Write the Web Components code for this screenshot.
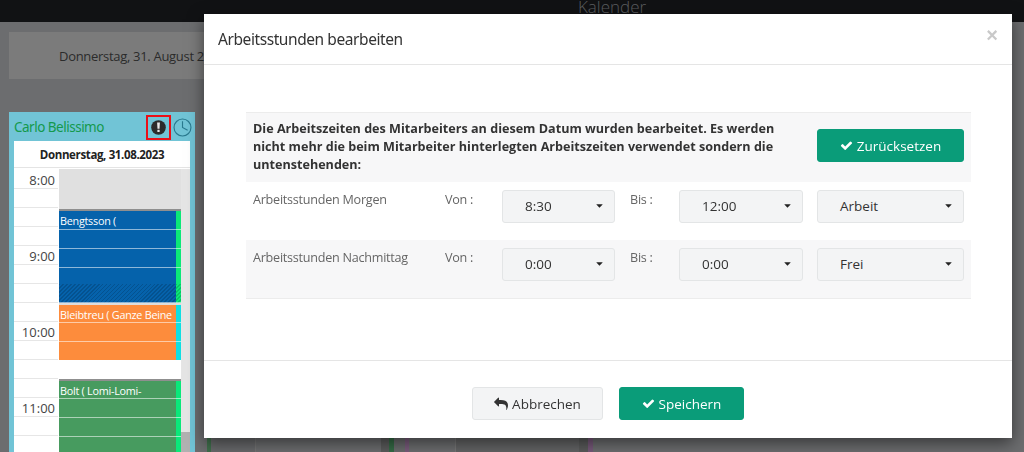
<!DOCTYPE html>
<html lang="de">
<head>
<meta charset="utf-8">
<title>Arbeitsstunden bearbeiten</title>
<style>
html,body{margin:0;height:452px;overflow:hidden;background:#6c6d6f;font-family:"Open Sans","Noto Sans",sans-serif;}
</style>
</head>
<body>
<app-page></app-page>
<script>
const ICONS={
 check:['0 0 1792 1792','<path fill="currentColor" d="M1671 566q0 40-28 68l-724 724-136 136q-28 28-68 28t-68-28l-136-136-362-362q-28-28-28-68t28-68l136-136q28-28 68-28t68 28l294 295 656-657q28-28 68-28t68 28l136 136q28 28 28 68z"/>'],
 reply:['0 0 1792 1792','<path fill="currentColor" d="M1792 1120q0 166-127 451-3 7-10.5 24t-13.5 30-13 22q-12 17-28 17-15 0-23.5-10t-8.5-25q0-9 2.5-26.5t2.5-23.5q5-68 5-123 0-101-17.5-181t-48.5-138.5-80-101-105.5-69.5-133-42.5-154-21.5-175.5-6h-224v256q0 26-19 45t-45 19-45-19l-512-512q-19-19-19-45t19-45l512-512q19-19 45-19t45 19 19 45v256h224q713 0 875 403 53 134 53 333z"/>'],
 alert:['0 0 16 16','<circle cx="8" cy="8" r="7.8" fill="currentColor"/><path d="M6.5 2.6h3L9.1 9.4H6.9z" fill="#e8e8e8"/><rect x="6.8" y="10.4" width="2.4" height="2.4" rx=".3" fill="#e8e8e8"/>'],
 clock:['0 0 20 20','<circle cx="10" cy="10" r="8.9" fill="none" stroke="currentColor" stroke-width="1.2"/><path d="M10 3.4V10l5.4 3" fill="none" stroke="currentColor" stroke-width="1.2"/>'],
 caret:['0 0 8 5','<path fill="currentColor" d="M.3.4h7.4q.3 0 .2.3L4.3 4.4q-.3.3-.6 0L.1.7Q0 .4.3.4z"/>']
};
function def(name,css,html,init){
 customElements.define(name,class extends HTMLElement{
  connectedCallback(){
   if(this.shadowRoot)return;
   const r=this.attachShadow({mode:'open'});
   const a=n=>this.getAttribute(n)||'';
   r.innerHTML='<style>'+css+'</style>'+(typeof html==='function'?html(a):html);
   if(init)init(r,a,this);
  }
 });
}
def('fa-icon',':host{display:inline-flex;line-height:0}svg{width:100%;height:100%;display:block}',
 a=>{const i=ICONS[a('name')];return '<svg viewBox="'+i[0]+'" aria-hidden="true">'+i[1]+'</svg>';});

def('top-bar',`:host{display:block;height:22px;background:#111214;overflow:hidden;box-sizing:border-box;padding-left:200px;text-align:center;
 color:#5c5e60;font-size:17px;line-height:13px;font-weight:300}`,'<slot></slot>');

def('date-bar',`:host{display:flex;align-items:center;height:47px;margin:10px 12px 33px 9px;padding-left:50px;background:#7b7b7b;
 color:#2b2b2b;font-size:13px;letter-spacing:-.3px;white-space:nowrap}`,'<slot></slot>');

def('time-row',`:host{display:flex;align-items:center;justify-content:flex-end;box-sizing:border-box;height:19px;padding-right:3px;
 border-bottom:1px solid #e6e6e6;color:#444;font-size:13px;line-height:19px;padding-top:3px}`,'<slot></slot>');

def('cal-event',`:host{display:flex;flex:none;box-sizing:border-box;overflow:hidden}
 .main{flex:1;min-width:0;box-sizing:border-box;padding-left:1px;color:var(--tx,#fff);font-size:10.8px;letter-spacing:-.25px;line-height:20px;white-space:nowrap;overflow:hidden;
 background-repeat:repeat}
 .strip{width:5px;flex:none}`,
 a=>{
  const line='repeating-linear-gradient(to bottom,transparent 0 18px,rgba(255,255,255,.55) 18px 19px)';
  const hatch=a('hatched')?',repeating-linear-gradient(135deg,rgba(0,0,0,.16) 0 1px,transparent 1px 2.8px)':'';
  const st=a('strip');
  const h=a('h');
  const off=a('off')||'0';
  return '<div class="main" style="height:'+h+'px;padding-top:'+(a('pt')||0)+'px;background-color:'+a('color')+';background-image:'+line+hatch+';background-position:0 '+off+'px'+(hatch?',0 0':'')+'"><slot></slot></div>'+
   '<div class="strip" style="height:'+h+'px;background-color:'+st+';background-image:'+line+hatch+';background-position:0 '+off+'px'+(hatch?',0 0':'')+'"></div>';
 },
 (r,a,el)=>{el.style.height=a('h')+'px';if(a('edge'))el.style.borderTop='2px solid '+a('edge');}
);

def('cal-card',`:host{display:block;flex:none;width:186px;box-sizing:border-box;padding:0 5px;background:#71c4d6;align-self:stretch;overflow:hidden}
 .head{display:flex;align-items:center;height:29px}
 .name{flex:1;color:#14994d;font-size:13.5px;letter-spacing:-.5px;font-family:"Noto Sans","Open Sans",sans-serif;white-space:nowrap;padding-top:1px}
 .flag{display:flex;align-items:center;justify-content:center;box-sizing:border-box;width:25px;height:25px;border:2px solid #ea1018;color:#2c2c2c;margin-top:1px}
 .flag fa-icon{width:15px;height:15px}
 .clock{width:19px;height:19px;margin:1px -2px 0 2px;color:#2a7a8f}
 .day{background:#fff;height:27px;box-sizing:border-box;text-align:center;font-weight:700;font-size:11.5px;letter-spacing:-.36px;line-height:27px;color:#222;border-bottom:1px solid #e4e4e4;white-space:nowrap}
 .grid{display:grid;grid-template-columns:45px 1fr 9px;height:284px;background:#fff;padding-top:1px;box-sizing:border-box}
 .times{background:#fff;padding-top:1px;overflow:hidden;box-sizing:border-box;padding-right:1px}
 .events{display:flex;flex-direction:column;overflow:hidden;background:#fff;min-height:0}
 .gray{height:40px;flex:none;background:#e0e0e0}
 .sb{display:flex;flex-direction:column;background:#e5e5e5}
 .sb i{display:block;margin-top:auto;height:20px;background:#b1b1b1}`,
 a=>`<div class="head"><span class="name">${a('name')}</span><span class="flag"><fa-icon name="alert"></fa-icon></span><fa-icon class="clock" name="clock"></fa-icon></div>
 <div class="day">${a('day')}</div>
 <div class="grid"><div class="times"><slot name="times"></slot></div><div class="events"><div class="gray"></div><slot name="events"></slot></div><div class="sb"><i></i></div></div>`);

def('bg-columns',`:host{display:flex;flex:1;min-width:0;align-self:stretch;padding-left:12px}
 i{display:block;flex:none;height:100%}`,
 a=>a('spec').split(' ').map(s=>{const[p,c]=s.split(':');return '<i style="width:'+p+'px;background:'+c+'"></i>';}).join(''));

def('dd-select',`:host{display:flex;align-items:center;box-sizing:border-box;height:33px;background:#f3f4f5;border:1px solid #e3e5e6;border-radius:3px;
 padding:0 11px 2px 22px;color:#333;font-size:13.5px}
 span{flex:1}fa-icon{width:7px;height:4px;color:#222}`,
 '<span><slot></slot></span><fa-icon name="caret"></fa-icon>');

def('action-btn',`:host{display:inline-flex;align-items:center;justify-content:center;gap:4px;box-sizing:border-box;height:33px;border-radius:3px;font-size:13.5px;white-space:nowrap;
 border:1px solid #0a9c79;background:#0a9c79;color:#fff}
 :host([plain]){background:#f3f4f5;border-color:#e3e5e6;color:#333}
 fa-icon{width:13px;height:13px}
 :host([plain]) fa-icon{width:14px;height:14px}`,
 a=>'<fa-icon name="'+a('icon')+'"></fa-icon><span><slot></slot></span>');

def('work-row',`:host{display:grid;grid-template-columns:192px 57px 113px 15px 49px 124px 14px 147px;padding:8px 0 0 7px;height:58px;box-sizing:border-box;
 color:#666;font-size:12.6px;letter-spacing:-.25px;line-height:18px;background:#fff}
 :host([shade]){background:#f7f7f8}
 .l{padding-top:1px}
 dd-select{letter-spacing:0}`,
 a=>`<div class="l">${a('label')}</div><div class="l">Von :</div><dd-select>${a('from')}</dd-select><div></div><div class="l">Bis :</div><dd-select>${a('to')}</dd-select><div></div><dd-select>${a('kind')}</dd-select>`);

def('work-modal',`:host{display:flex;flex-direction:column;position:fixed;left:204px;top:14px;width:808px;height:424px;background:#fff;box-sizing:border-box;
 box-shadow:0 5px 15px rgba(0,0,0,.5);color:#333}
 header{display:flex;align-items:center;justify-content:space-between;height:51px;box-sizing:border-box;flex:none;padding:0 14px;border-bottom:1px solid #e5e5e5}
 h4{margin:0;font-weight:400;font-size:15.5px;letter-spacing:-.42px;color:#333;font-family:"Noto Sans","Open Sans",sans-serif}
 .x{color:#c9c9c9;font-weight:700;font-size:20px;line-height:20px;margin-top:-8px;font-family:"Liberation Sans",sans-serif}
 .body{flex:1;padding:47px 41px 0 42px;min-height:0}
 .notice{display:grid;grid-template-columns:564px 147px;align-items:center;padding:0 7px;height:70px;box-sizing:border-box;background:#f7f7f8;border-top:1px solid #ececec}
 .notice b{font-size:12.6px;line-height:18px;color:#333;display:block;width:536px;padding-bottom:2px}
 .notice action-btn{align-self:start;margin-top:16px}
 .rows{border-bottom:1px solid #ececec}
 footer{flex:none;height:78px;box-sizing:border-box;border-top:1px solid #e5e5e5;padding-top:26px;display:flex;justify-content:center;gap:16px}
 footer action-btn:first-child{width:131px}footer action-btn:last-child{width:125px}`,
 `<header><h4>Arbeitsstunden bearbeiten</h4><span class="x">×</span></header>
 <div class="body">
  <div class="notice"><b>Die Arbeitszeiten des Mitarbeiters an diesem Datum wurden bearbeitet. Es werden nicht mehr die beim Mitarbeiter hinterlegten Arbeitszeiten verwendet sondern die untenstehenden:</b><action-btn icon="check">Zurücksetzen</action-btn></div>
  <div class="rows">
   <work-row label="Arbeitsstunden Morgen" from="8:30" to="12:00" kind="Arbeit"></work-row>
   <work-row shade label="Arbeitsstunden Nachmittag" from="0:00" to="0:00" kind="Frei"></work-row>
  </div>
 </div>
 <footer><action-btn plain icon="reply">Abbrechen</action-btn><action-btn icon="check">Speichern</action-btn></footer>`);

def('app-page',`:host{display:flex;flex-direction:column;height:452px;overflow:hidden}
 .stage{flex:1;min-height:0;display:flex;padding-left:9px}`,
 `<top-bar>Kalender</top-bar>
 <date-bar>Donnerstag, 31. August 2023</date-bar>
 <div class="stage">
  <cal-card name="Carlo Belissimo" day="Donnerstag, 31.08.2023">
   <div slot="times">
    <time-row>8:00</time-row><time-row></time-row><time-row></time-row><time-row></time-row>
    <time-row>9:00</time-row><time-row></time-row><time-row></time-row><time-row></time-row>
    <time-row>10:00</time-row><time-row></time-row><time-row></time-row><time-row></time-row>
    <time-row>11:00</time-row><time-row></time-row><time-row></time-row>
   </div>
   <cal-event slot="events" h="75" color="#0562ab" strip="#0ce878" edge="#8f8f8f">Bengtsson (</cal-event>
   <cal-event slot="events" h="19" color="#0562ab" strip="#0ce878" hatched="1"></cal-event>
   <cal-event slot="events" h="57" color="#fd8c3c" strip="#0fdfe2" off="-1" edge="#ddd">Bleibtreu ( Ganze Beine</cal-event>
   <div slot="events" style="height:19px;background:#fff;flex:none"></div>
   <cal-event slot="events" h="73" color="#479b5f" strip="#0ae87a" off="-1" edge="#8f8f8f">Bolt ( Lomi-Lomi-</cal-event>
  </cal-card>
  <bg-columns spec="4:#3f6e4b 44:#68696b 1:#757575 125:#6c6d6f 8:#5b5c5c 5:#356b46 11:#6a6b6d 4:#7a5c7c 46:#6c6d6f 1:#777 123:#636465 9:#5a5b5b 5:#77597a 432:#6c6d6f"></bg-columns>
 </div>
 <work-modal></work-modal>`);
</script>
</body>
</html>
